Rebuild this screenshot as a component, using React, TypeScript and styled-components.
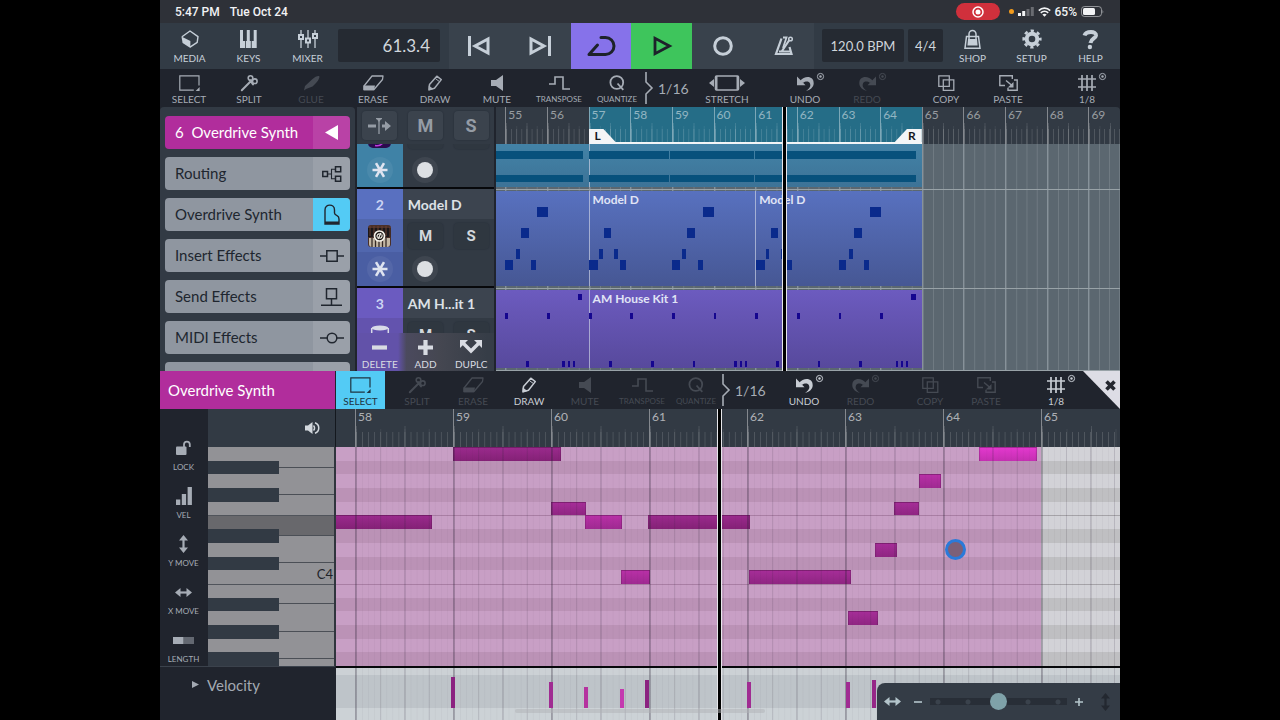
import React from "react";
import styled, { createGlobalStyle, css } from "styled-components";

/* ---------- theme values ---------- */
const c = {
  status: "#2e3138",
  bar: "#323b45",
  transport: "#39424c",
  dark: "#20242d",
  panel: "#323a44",
  raised: "#3b434d",
  lcd: "#252a32",
  icon: "#c6cfd8",
  tool: "#a6acb5",
  dim: "#454a53",
  magenta: "#b12d9c",
  cyan: "#53cbf5",
};

const GlobalStyle = createGlobalStyle`
  * { box-sizing: border-box; }
  body {
    margin: 0;
    background: #000;
    font-family: Lato, "Open Sans", sans-serif;
  }
  button {
    margin: 0;
    padding: 0;
    border: 0;
    background: none;
    color: inherit;
    font: inherit;
    cursor: pointer;
  }
  svg { display: block; overflow: visible; }
`;

const Screen = styled.main`
  position: relative;
  width: 75%;
  height: 100vh;
  min-height: 600px;
  margin: 0 auto;
  display: grid;
  grid-template-columns: minmax(0, 1fr);
  grid-template-rows: auto auto auto minmax(0, 264fr) minmax(0, 349fr);
  overflow: hidden;
  background: ${c.dark};
`;

/* ---------- status bar ---------- */
const StatusBar = styled.header`
  height: 23px;
  display: flex;
  align-items: center;
  gap: 10px;
  padding: 0 16px 0 15px;
  background: ${c.status};
  color: #f2f3f5;
  font: 500 12px/16px Roboto, sans-serif;
`;
const StatusRight = styled.div`
  margin-left: auto;
  display: flex;
  align-items: center;
  gap: 4px;
`;
const RecordPill = styled.button`
  width: 44px;
  height: 17px;
  margin-right: 5px;
  display: grid;
  place-items: center;
  border-radius: 9px;
  background: #d0303c;
  color: #fff;
`;
const OrangeDot = styled.span`
  width: 5px;
  height: 5px;
  border-radius: 50%;
  background: #f29b1d;
`;

/* ---------- main toolbar ---------- */
const MainBar = styled.nav`
  height: 46px;
  display: grid;
  grid-template-columns: 59fr 59fr 59fr 1fr 102fr 9fr 365fr 8fr 82fr 4fr 35fr 59fr 59fr 59fr;
  background: ${c.bar};
`;
const MainButton = styled.button<{ $col: number }>`
  grid-column: ${(p) => p.$col};
  display: flex;
  flex-direction: column;
  align-items: center;
  padding-top: 6px;
  gap: 4px;
  color: ${c.icon};
  font-size: 10px;
  line-height: 10px;
`;
const MainIcon = styled.span`
  height: 20px;
  display: grid;
  place-items: center;
`;
const Lcd = styled.output<{ $col: number; $right?: boolean }>`
  grid-column: ${(p) => p.$col};
  height: 33px;
  margin-top: 6px;
  padding: ${(p) => (p.$right ? "0 10px" : "0")};
  display: flex;
  align-items: center;
  justify-content: ${(p) => (p.$right ? "flex-end" : "center")};
  border-radius: 2px;
  background: ${c.lcd};
  color: #d0d6dc;
  font-size: ${(p) => (p.$right ? 17 : 13)}px;
  white-space: nowrap;
`;
const Transport = styled.div`
  grid-column: 7;
  display: grid;
  grid-template-columns: repeat(6, 1fr);
  background: ${c.transport};
`;
const TransportButton = styled.button<{ $bg?: string }>`
  display: grid;
  place-items: center;
  background: ${(p) => p.$bg ?? "transparent"};
  color: ${(p) => (p.$bg ? "#1d222a" : c.icon)};
`;

/* ---------- tool rows ---------- */
const ToolRow = styled.nav<{ $columns: string }>`
  height: 38px;
  display: grid;
  grid-template-columns: ${(p) => p.$columns};
  grid-template-rows: 38px;
  background: ${c.dark};
`;
const Tool = styled.button<{ $col: number; $active?: boolean; $small?: boolean; $bright?: boolean }>`
  grid-area: 1 / ${(p) => p.$col};
  min-width: 0;
  display: flex;
  flex-direction: column;
  align-items: center;
  padding-top: 5px;
  gap: 2px;
  color: ${c.tool};
  font-size: ${(p) => (p.$small ? 8 : 10)}px;
  line-height: 11px;
  white-space: nowrap;
  &:disabled {
    color: ${c.dim};
    cursor: default;
  }
  ${(p) => p.$bright && css`color: #c8cdd4;`}
  ${(p) => p.$active && css`background: ${c.cyan}; color: #1f3442;`}
`;
const ToolIcon = styled.span`
  position: relative;
  height: 18px;
  display: grid;
  place-items: center;
`;
const Badge = styled.span`
  position: absolute;
  top: -1px;
  left: 100%;
  margin-left: 3px;
`;
const QuantValue = styled.button<{ $col: number }>`
  grid-area: 1 / ${(p) => p.$col};
  display: flex;
  align-items: center;
  gap: 5px;
  padding-left: 1px;
  color: ${c.tool};
  font-size: 14px;
  white-space: nowrap;
`;
const CloseCorner = styled.button<{ $col: number }>`
  grid-area: 1 / ${(p) => p.$col};
  display: flex;
  justify-content: flex-end;
  padding: 9px 4px;
  background: #dddde5;
  color: #24272f;
  clip-path: polygon(0 0, 100% 0, 100% 100%);
`;

/* ---------- arrange area ---------- */
const Arrange = styled.section`
  display: grid;
  grid-template-columns: 195fr 2fr 137fr 2fr 624fr;
  overflow: hidden;
  background: ${c.dark};
`;
const Sidebar = styled.aside`
  grid-column: 1;
  display: flex;
  flex-direction: column;
  gap: 8px;
  padding: 9px 5px 0;
  overflow: hidden;
  border-radius: 4px 4px 0 0;
  background: ${c.panel};
`;
const SideItem = styled.button<{ $tone: "magenta" | "gray" }>`
  flex: none;
  height: 33px;
  display: flex;
  align-items: stretch;
  overflow: hidden;
  border-radius: 4px;
  background: ${(p) => (p.$tone === "magenta" ? c.magenta : "#8f96a0")};
  color: ${(p) => (p.$tone === "magenta" ? "#fff" : "#20262f")};
  font-size: 15px;
  text-align: left;
`;
const SideLabel = styled.span`
  flex: 1;
  min-width: 0;
  padding: 0 10px;
  line-height: 33px;
  white-space: pre;
`;
const SideIcon = styled.span<{ $on?: boolean }>`
  width: 37px;
  display: grid;
  place-items: center;
  background: ${(p) => (p.$on ? c.cyan : "rgba(255, 255, 255, 0.1)")};
`;

const TrackList = styled.div`
  grid-column: 3;
  position: relative;
  display: flex;
  flex-direction: column;
  overflow: hidden;
  background: ${c.panel};
`;
const TrackHead = styled.div`
  flex: none;
  height: 37px;
  display: grid;
  grid-template-columns: repeat(3, 1fr);
  place-items: center;
`;
const PadButton = styled.button<{ $large?: boolean }>`
  width: 35px;
  height: ${(p) => (p.$large ? 29 : 26)}px;
  display: grid;
  place-items: center;
  border-radius: 4px;
  background: ${(p) => (p.$large ? c.raised : "#2f3740")};
  box-shadow: 0 0 1px 1px rgba(20, 24, 30, 0.12);
  color: ${(p) => (p.$large ? "#959ca5" : "#d3d7dd")};
  font: 700 ${(p) => (p.$large ? 18 : 15)}px/20px Roboto, sans-serif;
`;
const Track = styled.article`
  flex: 1;
  min-height: 0;
  display: flex;
  flex-direction: column;
  overflow: hidden;
  border-bottom: 2px solid #07080b;
`;
const ClippedTrack = styled(Track)`
  flex: none;
  height: 45px;
  justify-content: flex-end;
`;
const FullTrack = styled(Track)`
  flex: none;
  height: 99px;
`;
const TrackRow = styled.div<{ $bg: string; $height: number; $title?: boolean }>`
  flex: none;
  height: ${(p) => p.$height}px;
  display: grid;
  grid-template-columns: repeat(3, 1fr);
  place-items: center;
  background: linear-gradient(to right, ${(p) => p.$bg} 33.5%, ${(p) => (p.$title ? "#3c444f" : c.panel)} 33.5%);
  color: #d9dbe8;
`;
const TrackNumber = styled.span`
  color: #ccd4f3;
  font-weight: 700;
  font-size: 14px;
`;
const TrackName = styled.h3`
  grid-column: span 2;
  justify-self: start;
  margin: 0;
  padding-left: 5px;
  color: #dde1e6;
  font-weight: 700;
  font-size: 14px;
  white-space: nowrap;
`;
const Round = styled.button`
  width: 26px;
  height: 26px;
  display: grid;
  place-items: center;
  border-radius: 50%;
  background: rgba(255, 255, 255, 0.06);
  color: #dfe4f0;
`;
const RecDot = styled.span`
  width: 16px;
  height: 16px;
  border-radius: 50%;
  background: #dcdfe3;
`;
const TrackActions = styled.div`
  position: absolute;
  inset: auto 0 0 0;
  height: 38px;
  display: grid;
  grid-template-columns: repeat(3, 1fr);
  background: linear-gradient(to right, #6252a9 30%, #4b4a5e 36%, #454751 60%, #363d47 95%);
`;
const TrackAction = styled.button`
  display: flex;
  flex-direction: column;
  align-items: center;
  padding-top: 4px;
  gap: 2px;
  color: #d8dbe2;
  font-size: 10px;
  line-height: 10px;
`;
const ActionIcon = styled.span`
  height: 20px;
  display: grid;
  place-items: center;
`;

/* ---------- timelines ---------- */
const ARRANGE_COLUMNS = "93fr repeat(14, 416.5fr) 316fr";
const ROLL_COLUMNS = "19fr repeat(7, 98fr) 79fr";
const arrangeX = (bar: number) => `${((9.3 + (bar - 55) * 41.65) / 624) * 100}%`;
const arrangeW = (bars: number) => `${((bars * 41.65) / 624) * 100}%`;
const rollX = (bar: number) => `${((19 + (bar - 58) * 98) / 784) * 100}%`;
const rollW = (bars: number) => `${((bars * 98) / 784) * 100}%`;

const Timeline = styled.div`
  grid-column: 5;
  position: relative;
  display: flex;
  flex-direction: column;
  overflow: hidden;
  border-radius: 0 4px 0 0;
`;
const Ruler = styled.div<{ $height: number }>`
  position: relative;
  flex: none;
  height: ${(p) => p.$height}px;
  display: flex;
  overflow: hidden;
  background: ${c.panel};
`;
const BarRow = styled.div<{ $columns: string }>`
  position: relative;
  flex: 1;
  display: grid;
  grid-template-columns: ${(p) => p.$columns};
  grid-template-rows: 100%;
`;
const tick = (a: number) => `linear-gradient(to right, rgba(255,255,255,${a}) 1px, transparent 1px)`;
const RulerCell = styled.span<{ $fine: string; $first: boolean; $long?: boolean }>`
  min-width: 0;
  padding-left: 2px;
  overflow: hidden;
  border-left: ${(p) => (p.$first ? "0" : "1px solid rgba(255, 255, 255, 0.4)")};
  background-image: ${(p) => (p.$first ? "none" : `${tick(0.12)}, ${tick(0.06)}, ${tick(0.14)}`)};
  background-repeat: repeat-x;
  background-position: left bottom;
  background-size: ${(p) => `50% 21px, 25% 18px, ${p.$fine} 15px`};
  color: rgba(255, 255, 255, ${(p) => (p.$long ? 0.62 : 0.5)});
  font-size: 12px;
  line-height: 16px;
`;
const LastRulerCell = styled(RulerCell)<{ $bar: number }>`
  background-size: ${(p) => `${p.$bar / 2}px 21px, ${p.$bar / 4}px 18px, ${p.$fine} 15px`};
`;
const Loop = styled.div`
  position: absolute;
  top: 0;
  bottom: 0;
  background: #256d87;
`;
const LoopEdge = styled.div`
  position: absolute;
  top: 22px;
  bottom: 0;
  display: flex;
  justify-content: space-between;
  border-bottom: 2px solid #f3f5f7;
`;
const Flag = styled.span<{ $side: "l" | "r" }>`
  width: 27px;
  padding: 0 6px;
  background: #f3f5f7;
  color: #15181d;
  font: 700 12px/14px Lato, sans-serif;
  text-align: ${(p) => (p.$side === "l" ? "left" : "right")};
  clip-path: ${(p) =>
    p.$side === "l" ? "polygon(0 0, 55% 0, 100% 100%, 0 100%)" : "polygon(45% 0, 100% 0, 100% 100%, 0 100%)"};
`;
const Lanes = styled.div`
  position: relative;
  flex: 1;
  min-height: 0;
  display: flex;
  flex-direction: column;
  background: #5b6770;
`;
const Layer = styled.div`
  position: absolute;
  inset: 0;
  display: flex;
`;
const LaneCell = styled.span<{ $first: boolean; $last?: boolean }>`
  border-left: ${(p) => (p.$first ? "0" : "1px solid #87929a")};
  background-image: ${(p) => (p.$first ? "none" : "linear-gradient(to right, #6f7a82 1px, transparent 1px)")};
  background-size: ${(p) => (p.$last ? "10px 100%" : "25% 100%")};
`;
const Lane = styled.div<{ $size: string }>`
  position: relative;
  flex: ${(p) => p.$size};
  overflow: hidden;
  border-bottom: 1px solid #98a2a7;
`;
const Clip = styled.div<{ $from: string; $to: string; $top: number }>`
  position: absolute;
  top: ${(p) => p.$top}px;
  bottom: 2px;
  padding: 1px 3px;
  border-left: 1px solid rgba(200, 205, 225, 0.7);
  background: linear-gradient(${(p) => p.$from}, ${(p) => p.$to});
  color: #e0e4f5;
  font-weight: 700;
  font-size: 12px;
  line-height: 16px;
  white-space: nowrap;
`;
const ClipNote = styled.i<{ $top: number; $height: number; $fill: string }>`
  position: absolute;
  top: ${(p) => p.$top}px;
  height: ${(p) => p.$height}px;
  min-width: 2px;
  background: ${(p) => p.$fill};
`;
const Playhead = styled.div`
  position: absolute;
  top: 0;
  bottom: 0;
  width: 5px;
  margin-left: -3px;
  border: solid #e6e6ea;
  border-width: 0 1px;
  background: #000;
`;

/* ---------- key editor ---------- */
const Editor = styled.section`
  position: relative;
  display: flex;
  flex-direction: column;
  min-height: 0;
  background: ${c.dark};
`;
const EditorTitle = styled.h2`
  grid-area: 1 / 1;
  margin: 0 1px 0 0;
  padding-left: 8px;
  background: ${c.magenta};
  color: #fff;
  font-weight: 400;
  font-size: 15px;
  line-height: 38px;
`;
const EditorBody = styled.div`
  flex: 1;
  min-height: 0;
  display: grid;
  grid-template-columns: 48fr 128fr 784fr;
  grid-template-rows: 38px minmax(0, 1fr) 54px;
`;
const EditTools = styled.div`
  grid-area: 1 / 1 / 3 / 2;
  display: flex;
  flex-direction: column;
  gap: 12px;
  padding: 28px 1px 0 0;
`;
const EditTool = styled.button`
  height: 36px;
  display: flex;
  flex-direction: column;
  align-items: center;
  gap: 3px;
  color: ${c.tool};
  font-size: 8px;
  line-height: 10px;
`;
const EditIcon = styled.span`
  height: 22px;
  display: grid;
  place-items: center;
`;
const KeysHead = styled.div`
  grid-area: 1 / 2;
  display: flex;
  align-items: center;
  justify-content: flex-end;
  padding-right: 15px;
  border-right: 1px solid #14181e;
  background: ${c.panel};
  color: #d3d8de;
`;
const Keys = styled.div`
  grid-area: 2 / 2;
  display: grid;
  grid-template-rows: repeat(16, minmax(0, 1fr));
  border-right: 2px solid #30353d;
  background: #929296;
`;
const KeyRow = styled.div<{ $held?: boolean; $line?: boolean }>`
  display: flex;
  justify-content: flex-end;
  align-items: flex-start;
  padding-right: 1px;
  border-top: ${(p) => (p.$line ? "1px solid #50545b" : "0")};
  background: ${(p) => (p.$held ? "#68686c" : "transparent")};
  color: #1f232a;
  font-size: 13px;
  line-height: 8px;
`;
const BlackKeyRow = styled.div<{ $held?: boolean }>`
  display: flex;
  background: linear-gradient(
    ${(p) => (p.$held ? "#68686c" : "#929296")} calc(50% - 1px),
    #4b4f56 calc(50% - 1px),
    #4b4f56 50%,
    #929296 50%
  );
  &::before {
    content: "";
    width: 56%;
    background: ${c.panel};
  }
`;
const Roll = styled.div`
  grid-area: 1 / 3 / 4 / 4;
  position: relative;
  min-height: 0;
  display: grid;
  grid-template-rows: 38px minmax(0, 1fr) 54px;
`;
const Notes = styled.div`
  position: relative;
  display: grid;
  grid-template-rows: repeat(16, minmax(0, 1fr));
  overflow: hidden;
`;
const PitchRow = styled.div<{ $black: boolean; $line: boolean }>`
  background: ${(p) => (p.$black ? "#bfbfc2" : "#d2d2d7")};
  border-top: ${(p) => (p.$line ? "1px solid #a5a3a8" : "0")};
`;
const PartTint = styled.div`
  position: absolute;
  top: 0;
  bottom: 0;
  left: 0;
  background: rgba(178, 44, 156, 0.3);
`;
const ink = (a: number) => `linear-gradient(to right, rgba(40,30,50,${a}) 1px, transparent 1px)`;
const RollCell = styled.span<{ $first: boolean; $last: boolean }>`
  border-left: ${(p) => (p.$first ? "0" : "1px solid rgba(40, 30, 50, 0.3)")};
  background-image: ${(p) => (p.$first ? "none" : `${ink(0.13)}, ${ink(0.12)}, ${ink(0.04)}`)};
  background-size: ${(p) => (p.$last ? "49px 100%, 24px 100%, 6px 100%" : "50% 100%, 25% 100%, 6.25% 100%")};
`;
const noteTones = {
  dark: "linear-gradient(#9a2a8c, #842176)",
  mid: "linear-gradient(#a52d97, #8f2582)",
  warm: "linear-gradient(#b830a6, #9f2991)",
  hot: "linear-gradient(#e238cd, #c42fb1)",
};
const Note = styled.i<{ $tone: keyof typeof noteTones }>`
  position: absolute;
  height: 6.25%;
  border: solid rgba(70, 15, 65, 0.25);
  border-width: 1px 1px 0;
  background: ${(p) => noteTones[p.$tone]};
`;
const Velocity = styled.div`
  position: relative;
  overflow: hidden;
  border-top: 2px solid #07080b;
  background: linear-gradient(#ccd1d5 7px, #bec4c9 7px, #bec4c9 40px, #ccd2d6 40px);
`;
const VelocityBar = styled.i<{ $tone: string }>`
  position: absolute;
  bottom: 12px;
  width: 4px;
  margin-left: -2px;
  background: ${(p) => p.$tone};
`;
const VelocityHead = styled.button`
  grid-area: 3 / 1 / 4 / 3;
  display: flex;
  align-items: flex-start;
  gap: 8px;
  margin: 0 1px 0 0;
  padding: 8px 0 0 32px;
  border-top: 1px solid #3b424c;
  color: #a3a9b2;
  font-size: 15px;
  line-height: 20px;
`;
const Marker = styled.span`
  display: grid;
  place-items: center;
  height: 18px;
`;
const Touch = styled.span`
  position: absolute;
  width: 21px;
  height: 21px;
  margin: -10px 0 0 -10px;
  border: 3px solid #2a7ad9;
  border-radius: 50%;
  background: #7c6078;
`;
const ZoomPanel = styled.div`
  position: absolute;
  right: 0;
  bottom: 0;
  width: 31%;
  height: 37px;
  display: flex;
  align-items: center;
  padding: 0 5px 0 7px;
  border-radius: 8px 0 0 0;
  background: #343c46;
  color: #b4c5cb;
`;
const ZoomButton = styled.button`
  flex: none;
  width: 20px;
  height: 24px;
  display: grid;
  place-items: center;
`;
const ZoomOut = styled(ZoomButton)`
  margin-left: 7px;
`;
const VerticalZoom = styled(ZoomButton)`
  margin-left: 6px;
  color: #232830;
`;
const ZoomSlider = styled.input`
  flex: 1;
  min-width: 0;
  height: 20px;
  margin: 0 2px;
  appearance: none;
  background:
    radial-gradient(circle, #3a424c 2px, transparent 3px) -7px center / 30px 8px repeat-x,
    linear-gradient(#282e37, #282e37) center / 100% 7px no-repeat;
  border-radius: 4px;
  &::-webkit-slider-thumb {
    appearance: none;
    width: 17px;
    height: 17px;
    border-radius: 50%;
    background: #7fa2a9;
  }
`;
const HomeIndicator = styled.div`
  position: absolute;
  left: 37%;
  right: 37%;
  bottom: 7px;
  height: 4px;
  border-radius: 2px;
  background: rgba(175, 178, 182, 0.5);
`;

/* ---------- icons ---------- */
type IconProps = { w: number; h: number; sw?: number; children: React.ReactNode };
const Ico = ({ w, h, sw = 1.5, children }: IconProps) => (
  <svg width={w} height={h} viewBox={`0 0 ${w} ${h}`} fill="none" stroke="currentColor" strokeWidth={sw} aria-hidden="true">
    {children}
  </svg>
);
const solid = { fill: "currentColor", stroke: "none" } as const;

const icons = {
  media: (
    <Ico w={18} h={18} sw={1.4}>
      <path d="M1 6.8 9 1l8 5.6-.8 5.8L9 17.2" strokeLinejoin="round" />
      <path {...solid} d="M.4 6.4 9.4 11v7L1.6 13z" />
    </Ico>
  ),
  keys: (
    <Ico w={17} h={18}>
      <path {...solid} d="M0 0h3v11h2v7H0zM5.800 11h1V0h3v11h1v7h-5zM11.700 11h2V0h3v18h-5z" />
    </Ico>
  ),
  mixer: (
    <Ico w={20} h={19} sw={1.3}>
      <path d="M3 0v18M10 0v18M17 0v18" />
      <path d="M1 5h4v4H1zM8 8.500h4v4H8zM15 4h4v4h-4z" fill="#323b45" strokeWidth="2" />
    </Ico>
  ),
  back: (
    <Ico w={22} h={20} sw={3}>
      <path d="M1.500 0v20M20 3v14L7 10z" />
    </Ico>
  ),
  next: (
    <Ico w={22} h={20} sw={3}>
      <path d="M20.500 0v20M2 3v14l13-7z" />
    </Ico>
  ),
  cycle: (
    <Ico w={28} h={20} sw={3}>
      <path d="M14 1.500h4.500a8.500 8.500 0 0 1 0 17H2L10.500 9" strokeLinejoin="round" strokeLinecap="round" />
    </Ico>
  ),
  play: (
    <Ico w={20} h={20} sw={2.8}>
      <path d="M3 2.300v15.400L17.500 10z" />
    </Ico>
  ),
  record: (
    <Ico w={20} h={20} sw={3}>
      <circle cx="10" cy="10" r="8.300" />
    </Ico>
  ),
  metronome: (
    <Ico w={20} h={20} sw={2}>
      <path d="M5 15.500h12M7.500 2.500 2 18h15.500l-2-7M8 15 16 3" strokeWidth="2.200" />
      <path d="M9 1.500h3.500L9 12" strokeWidth="1.800" />
      <circle cx="16.500" cy="3" r="1.800" fill="#39424c" strokeWidth="1.500" />
    </Ico>
  ),
  shop: (
    <Ico w={17} h={19} sw={1.5}>
      <path d="M2.500 6.500h12l1.500 11.700H1z" />
      <path d="M5 9V4a3.500 3.500 0 0 1 7 0v5" />
      <path {...solid} d="M4 9h9l.6 6.500H3.400z" />
    </Ico>
  ),
  setup: (
    <Ico w={20} h={20}>
      <circle cx="10" cy="10" r="5.300" strokeWidth="4" />
      <circle cx="10" cy="10" r="8.300" strokeWidth="2.600" strokeDasharray="3.260 3.260" strokeDashoffset="1.630" />
    </Ico>
  ),
  help: (
    <Ico w={16} h={19} sw={4}>
      <path d="M1.500 5.500C3 .8 13.500.8 13 5.500 12.600 8.600 8.200 8.300 7.500 13" />
      <circle {...solid} cx="6.900" cy="17" r="2.200" />
    </Ico>
  ),
  select: (
    <Ico w={21} h={16} sw={1.2}>
      <path d="M20 10.500V.8H.8v14.400h14" />
      <path {...solid} d="M20.600 12v4h-4z" />
    </Ico>
  ),
  split: (
    <Ico w={17} h={16} sw={1.6}>
      <path d="M.8 15.200 10 6M4 12l3.500-3.500M10 6.500l2 3" strokeLinecap="round" strokeWidth="2" />
      <circle cx="9.500" cy="3" r="2.300" />
      <circle cx="13.800" cy="6.200" r="2.300" />
      <path d="M8.500 4.500 11 7" />
    </Ico>
  ),
  glue: (
    <Ico w={17} h={16}>
      <path {...solid} d="M1 15.500 2 11 9 4.500C12 1.500 15 .5 16 1s0 4-3 7l-3.500 3.500L3 14z" />
    </Ico>
  ),
  erase: (
    <Ico w={21} h={16} sw={1.3}>
      <path d="M9 1h11l-.5 3.500L11 14.500H1V11z" strokeLinejoin="round" />
      <path {...solid} d="M.5 10.500H12l-1 4.700H.5z" />
    </Ico>
  ),
  draw: (
    <Ico w={16} h={16} sw={1.500}>
      <path d="M2.500 9.500 9.800 1.200l4.500 3.400-6.800 8.600-5.400 1.500z" strokeLinejoin="round" />
      <path {...solid} d="m1.600 10.500 5 3.500-5.200 1.500z" />
      <path d="m8.300 3.500 4.300 3.200" strokeWidth="1" />
    </Ico>
  ),
  mute: (
    <Ico w={13} h={16}>
      <path {...solid} d="M0 5h5l7-5v16l-7-5H0z" />
    </Ico>
  ),
  transpose: (
    <Ico w={21} h={14} sw={1.6}>
      <path d="M0 8h6V1h8v12h7" />
    </Ico>
  ),
  quantize: (
    <Ico w={16} h={16} sw={1.8}>
      <circle cx="7.800" cy="7.500" r="6.400" />
      <path d="m8.500 8.500 5.800 6.300" />
    </Ico>
  ),
  bracket: (
    <Ico w={8} h={32} sw={1.6}>
      <path d="M1 0v10l6 6-6 6v10" />
    </Ico>
  ),
  stretch: (
    <Ico w={36} h={16} sw={1.5}>
      <rect x="6.500" y="1" width="23" height="14" rx="1" />
      <path {...solid} d="M5 4v8L0 8zM31 4v8l5-4zM6 1h2.500v14H6zM27.500 1H30v14h-2.500z" />
    </Ico>
  ),
  undo: (
    <Ico w={17} h={15} sw={3}>
      <path {...solid} d="M0 .5v8.800h8.500z" />
      <path {...solid} d="M3 5C8-1 17 0 16.700 7.500 16.500 11.500 13 14 9 15c4-3 5-5 4-7.500C12 5 8.500 5 6 7z" />
    </Ico>
  ),
  redo: (
    <Ico w={17} h={15} sw={3}>
      <path {...solid} d="M17 .5v8.800H8.500z" />
      <path {...solid} d="M14 5C9-1 0 0 .3 7.500.5 11.500 4 14 8 15c-4-3-5-5-4-7.500C5 5 8.500 5 11 7z" />
    </Ico>
  ),
  badge: (
    <Ico w={7} h={7} sw={1}>
      <circle cx="3.500" cy="3.500" r="3.100" />
      <circle {...solid} cx="3.500" cy="3.500" r="1.200" />
    </Ico>
  ),
  copy: (
    <Ico w={17} h={16} sw={1.3}>
      <path d="M.8.8h10.500v10.500H.8zM5.300 4.800h10.500v10.500H5.300z" />
    </Ico>
  ),
  paste: (
    <Ico w={19} h={16} sw={1.4}>
      <path d="M6 10.500H.8V.8h12.500V4M15 5h3.200v10.300H9v-2.500" />
      <path d="M7 5.500l6 5" />
      <path {...solid} d="M14.500 7v5.500H8.800z" />
    </Ico>
  ),
  grid: (
    <Ico w={18} h={16} sw={1.7}>
      <path d="M4 0v16M9 0v16M14 0v16M0 4h18M0 12h18" />
    </Ico>
  ),
  close: (
    <Ico w={11} h={11} sw={3.6}>
      <path d="m1.500 1.500 8 8M9.500 1.500l-8 8" />
    </Ico>
  ),
  triLeft: (
    <Ico w={13} h={15}>
      <path {...solid} d="M13 0v15L0 7.500z" />
    </Ico>
  ),
  routing: (
    <Ico w={20} h={16} sw={1.5}>
      <path d="M.8 5.500h4.700v5H.8zM13.500.8h5.200v5h-5.200zM13.500 10.300h5.200v5h-5.200z" />
      <path d="M5.500 8h4M13 3.200H9.500v9.600H13" strokeWidth="1.100" />
    </Ico>
  ),
  piano: (
    <Ico w={16} h={21} sw={1.4}>
      <path d="M1 20V6c0-6.500 9.500-6.500 9.500 0v3c0 1.500 1 2 2.500 2.600 1.800.7 2 1.600 2 3.400v5z" />
      <path d="M1 18.700h14" strokeWidth="2.500" />
    </Ico>
  ),
  insert: (
    <Ico w={24} h={12} sw={1.5}>
      <path d="M6.800.8h10.400v10.400H6.800zM0 6h6.800M17.200 6H24" />
    </Ico>
  ),
  send: (
    <Ico w={21} h={18} sw={1.5}>
      <path d="M5.500.8h10v10h-10zM10.500 11v6M0 17.200h21" />
    </Ico>
  ),
  midi: (
    <Ico w={24} h={12} sw={1.5}>
      <circle cx="12" cy="6" r="4.800" />
      <path d="M0 6h7.200M16.800 6H24" />
    </Ico>
  ),
  follow: (
    <Ico w={23} h={16} sw={3}>
      <path d="M0 8h8M14 8h5" />
      <path d="M8 .7h6M11 0v16" strokeWidth="1.300" />
      <path {...solid} d="M17 3l6 5-6 5zM8 0h6l-3 4z" />
    </Ico>
  ),
  star: (
    <Ico w={16} h={16} sw={2.6}>
      <path d="M.5 8h15M4 1.200l8 13.600M12 1.200 4 14.800" />
    </Ico>
  ),
  synth: (
    <svg width="23" height="22" viewBox="0 0 23 22" aria-hidden="true">
      <rect width="23" height="22" rx="3" fill="#4b3028" />
      <path d="M0 3h23v9H0z" fill="#1b1718" />
      <path d="M2 1v10M6 1v10M10 1v10M14 1v10M18 1v10M22 2v10" stroke="#6b4030" />
      <path d="M1 13h21v6q0 3-3 3H4q-3 0-3-3z" fill="#c3b7a4" />
      <path d="M4 13v9M7.500 13v9M11 13v9M14.500 13v9M18 13v9" stroke="#352a27" strokeWidth="1.300" />
      <circle cx="11.500" cy="11" r="5" fill="#171310" stroke="#f6f2ea" strokeWidth="1.700" />
      <path d="M9.500 12.700c-1.500-2.500.8-4.700 3-3.500M13.700 9.300c1.500 2.500-.8 4.700-3 3.500M13 8l-3 6" stroke="#f6f2ea" fill="none" strokeWidth="1.200" />
    </svg>
  ),
  purpleApp: (
    <svg width="23" height="24" viewBox="0 0 23 24" aria-hidden="true">
      <rect width="23" height="24" rx="5" fill="#2a0b4d" />
      <path d="M7 21.500c4 1 7-1 9-4" stroke="#c03be0" strokeWidth="1.500" fill="none" />
    </svg>
  ),
  drum: (
    <Ico w={18} h={20} sw={1.5}>
      <ellipse cx="9" cy="3" rx="8.300" ry="2.500" {...solid} />
      <path d="M.7 3v12c0 3 16.600 3 16.600 0V3" />
    </Ico>
  ),
  minus: (
    <Ico w={15} h={15} sw={4.2}>
      <path d="M0 7.500h15" />
    </Ico>
  ),
  plus: (
    <Ico w={15} h={15} sw={4.2}>
      <path d="M0 7.500h15M7.500 0v15" />
    </Ico>
  ),
  duplicate: (
    <Ico w={22} h={14} sw={3.4}>
      <path d="M3.500 3.500 11 11l7.500-7.500" />
      <path {...solid} d="M0 0h8L0 8zM22 0h-8l8 8z" />
    </Ico>
  ),
  lock: (
    <Ico w={15} h={14} sw={1.800}>
      <rect {...solid} x="0" y="5.500" width="10.500" height="8.500" rx="1" />
      <path d="M8 6V3.500a2.900 2.900 0 0 1 5.800 0V6" />
    </Ico>
  ),
  vel: (
    <Ico w={16} h={18}>
      <path {...solid} d="M0 12.500h4.300V18H0zM5.800 7h4.300v11H5.800zM11.600 0h4.300v18h-4.300z" />
    </Ico>
  ),
  yMove: (
    <Ico w={9} h={18} sw={2.2}>
      <path d="M4.500 3v12" />
      <path {...solid} d="M4.500 0 9 5.500H0zM4.500 18 9 12.500H0z" />
    </Ico>
  ),
  xMove: (
    <Ico w={17} h={9} sw={2.2}>
      <path d="M3 4.500h11" />
      <path {...solid} d="M0 4.500 5.500 0v9zM17 4.500 11.500 0v9z" />
    </Ico>
  ),
  length: (
    <Ico w={21} h={7}>
      <path {...solid} d="M0 0h10.500v7H0z" />
      <path {...solid} opacity=".5" d="M10.500 0H21v7H10.500z" />
    </Ico>
  ),
  speaker: (
    <Ico w={15} h={12} sw={1.5}>
      <path {...solid} d="M0 3.500h3L7.500 0v12L3 8.500H0z" />
      <path d="M8.500 3.500a3.500 3.500 0 0 1 0 5M10 .8c5 1.700 5 8.700 0 10.400" />
    </Ico>
  ),
  triRight: (
    <Ico w={7} h={7}>
      <path {...solid} d="M0 0v7l7-3.500z" />
    </Ico>
  ),
  thinMinus: (
    <Ico w={8} h={8} sw={1.6}>
      <path d="M0 4h8" />
    </Ico>
  ),
  thinPlus: (
    <Ico w={8} h={8} sw={1.6}>
      <path d="M0 4h8M4 0v8" />
    </Ico>
  ),
  pill: (
    <Ico w={12} h={12} sw={1.5}>
      <circle cx="6" cy="6" r="5" />
      <circle {...solid} cx="6" cy="6" r="2.500" />
    </Ico>
  ),
  signal: (
    <Ico w={16} h={9}>
      <path {...solid} d="M0 6h3v3H0zM4.200 4h3v5h-3z" />
      <path {...solid} opacity=".3" d="M8.500 2h3v7h-3zM12.800 0h3v9h-3z" />
    </Ico>
  ),
  wifi: (
    <Ico w={13} h={10} sw={1.7}>
      <path d="M.8 3.600c3.200-3.200 8.200-3.200 11.400 0M2.800 5.800c2.100-2 5.300-2 7.400 0" />
      <path {...solid} d="M4.300 7.500c1.300-1.100 3.100-1.100 4.400 0L6.500 9.800z" />
    </Ico>
  ),
  battery: (
    <Ico w={23} h={11} sw={1}>
      <rect x=".5" y=".5" width="20" height="10" rx="3" opacity=".5" />
      <rect {...solid} x="2" y="2" width="12" height="7" rx="1.500" />
      <path {...solid} opacity=".5" d="M21.500 3.500q1.500 2 0 4z" />
    </Ico>
  ),
};
type IconName = keyof typeof icons;

/* ---------- data ---------- */
type ToolDef = { col: number; label: string; icon: IconName; off?: boolean; small?: boolean; badge?: boolean; on?: boolean; bright?: boolean };

const projectTools: ToolDef[] = [
  { col: 1, label: "SELECT", icon: "select" },
  { col: 2, label: "SPLIT", icon: "split" },
  { col: 3, label: "GLUE", icon: "glue", off: true },
  { col: 4, label: "ERASE", icon: "erase" },
  { col: 5, label: "DRAW", icon: "draw" },
  { col: 6, label: "MUTE", icon: "mute" },
  { col: 7, label: "TRANSPOSE", icon: "transpose", small: true },
  { col: 8, label: "QUANTIZE", icon: "quantize", small: true },
  { col: 10, label: "STRETCH", icon: "stretch" },
  { col: 12, label: "UNDO", icon: "undo", badge: true },
  { col: 13, label: "REDO", icon: "redo", off: true, badge: true },
  { col: 15, label: "COPY", icon: "copy" },
  { col: 16, label: "PASTE", icon: "paste" },
  { col: 18, label: "1/8", icon: "grid", badge: true },
];
const editorTools: ToolDef[] = [
  { col: 2, label: "SELECT", icon: "select", on: true },
  { col: 4, label: "SPLIT", icon: "split", off: true },
  { col: 5, label: "ERASE", icon: "erase", off: true },
  { col: 6, label: "DRAW", icon: "draw", bright: true },
  { col: 7, label: "MUTE", icon: "mute", off: true },
  { col: 8, label: "TRANSPOSE", icon: "transpose", off: true, small: true },
  { col: 9, label: "QUANTIZE", icon: "quantize", off: true, small: true },
  { col: 11, label: "UNDO", icon: "undo", badge: true, bright: true },
  { col: 12, label: "REDO", icon: "redo", off: true, badge: true },
  { col: 14, label: "COPY", icon: "copy", off: true },
  { col: 15, label: "PASTE", icon: "paste", off: true },
  { col: 17, label: "1/8", icon: "grid", badge: true, bright: true },
];
const sideItems: { label: string; icon: IconName; on?: boolean; magenta?: boolean }[] = [
  { label: "6  Overdrive Synth", icon: "triLeft", magenta: true },
  { label: "Routing", icon: "routing" },
  { label: "Overdrive Synth", icon: "piano", on: true },
  { label: "Insert Effects", icon: "insert" },
  { label: "Send Effects", icon: "send" },
  { label: "MIDI Effects", icon: "midi" },
];

/* Model D riff: [start in bars, length in bars, top in px] */
const riffA = [[0.01, 0.22, 69], [0.26, 0.08, 58], [0.37, 0.18, 37], [0.62, 0.08, 58], [0.75, 0.14, 69]];
const riffB = [[0, 0.19, 69], [0.25, 0.1, 58], [0.37, 0.19, 37], [0.62, 0.12, 69], [0.75, 0.27, 16]];
const modelNotes = [
  ...[57, 61].flatMap((bar) => riffA.map(([s, l, t]) => [bar + s, l, t])),
  ...[55, 59, 63].flatMap((bar) => riffB.map(([s, l, t]) => [bar + s, l, t])),
];
const kitHits = [
  ...[56.75, 64.75].map((b) => [b, 0.1, 5]),
  ...[55, 56, 57, 58, 59, 60, 61, 62, 63, 64].map((b) => [b, 0.07, 24]),
  ...[55.5, 56.37, 56.5, 56.62, 57.5, 58.5, 59.5, 60.5, 60.63, 60.75, 61.5, 62.5, 63.5, 64.37, 64.5, 64.62].map((b) => [b, 0.06, 72]),
];
const audioParts = [[54, 2.87], [57, 1.92], [58.95, 2.01], [61, 3.87]];

/* Key editor: [start bar, end bar, pitch row, tone] */
const rollNotes: [number, number, number, keyof typeof noteTones][] = [
  [59, 60.1, 0, "dark"],
  [60, 60.36, 4, "mid"],
  [57.8, 58.79, 5, "dark"],
  [60.35, 60.72, 5, "warm"],
  [60.99, 62.03, 5, "dark"],
  [60.71, 61.01, 9, "warm"],
  [62.02, 63.06, 9, "mid"],
  [63.03, 63.34, 12, "mid"],
  [63.31, 63.53, 7, "mid"],
  [63.5, 63.75, 4, "mid"],
  [63.75, 63.98, 2, "warm"],
  [64.37, 64.96, 0, "hot"],
];
const velocities: [number, number, string][] = [
  [59, 31, "#8b2280"],
  [60, 26, "#a02c92"],
  [60.36, 21, "#b5329f"],
  [60.72, 19, "#c43aaf"],
  [60.98, 28, "#8b2280"],
  [62.02, 26, "#a02c92"],
  [63.03, 26, "#a02c92"],
  [63.3, 28, "#962787"],
];
const blackRows = [1, 3, 6, 8, 11, 13, 15];
const PLAYHEAD_BAR = 61.72;

const range = (from: number, to: number) => Array.from({ length: to - from + 1 }, (_, i) => from + i);

/* ---------- components ---------- */
const ToolButton = ({ t }: { t: ToolDef }) => (
  <Tool $col={t.col} $active={t.on} $small={t.small} $bright={t.bright} disabled={t.off} type="button">
    <ToolIcon>
      {icons[t.icon]}
      {t.badge && <Badge>{icons.badge}</Badge>}
    </ToolIcon>
    {t.label}
  </Tool>
);

const Main = ({ col, label, icon }: { col: number; label: string; icon: IconName }) => (
  <MainButton $col={col} type="button">
    <MainIcon>{icons[icon]}</MainIcon>
    {label}
  </MainButton>
);

const TrackControls = ({ bg, app, height = 34 }: { bg: string; app: IconName; height?: number }) => (
  <TrackRow $bg={bg} $height={height}>
    {icons[app]}
    <PadButton type="button" aria-label="Mute track">M</PadButton>
    <PadButton type="button" aria-label="Solo track">S</PadButton>
  </TrackRow>
);

const RecordRow = ({ bg }: { bg: string }) => (
  <TrackRow $bg={bg} $height={34}>
    <Round type="button" aria-label="Freeze">{icons.star}</Round>
    <Round type="button" aria-label="Arm recording"><RecDot /></Round>
  </TrackRow>
);

export default function App() {
  return (
    <>
      <GlobalStyle />
      <Screen>
        <StatusBar>
          <span>5:47 PM</span>
          <span>Tue Oct 24</span>
          <StatusRight>
            <RecordPill type="button" aria-label="Stop recording">{icons.pill}</RecordPill>
            <OrangeDot />
            {icons.signal}
            {icons.wifi}
            <span>65%</span>
            {icons.battery}
          </StatusRight>
        </StatusBar>

        <MainBar>
          <Main col={1} label="MEDIA" icon="media" />
          <Main col={2} label="KEYS" icon="keys" />
          <Main col={3} label="MIXER" icon="mixer" />
          <Lcd $col={5} $right>61.3.4</Lcd>
          <Transport>
            <TransportButton type="button" aria-label="Previous">{icons.back}</TransportButton>
            <TransportButton type="button" aria-label="Next">{icons.next}</TransportButton>
            <TransportButton type="button" aria-label="Cycle" $bg="#8672ea">{icons.cycle}</TransportButton>
            <TransportButton type="button" aria-label="Play" $bg="#3ec55c">{icons.play}</TransportButton>
            <TransportButton type="button" aria-label="Record">{icons.record}</TransportButton>
            <TransportButton type="button" aria-label="Metronome">{icons.metronome}</TransportButton>
          </Transport>
          <Lcd $col={9}>120.0 BPM</Lcd>
          <Lcd $col={11}>4/4</Lcd>
          <Main col={12} label="SHOP" icon="shop" />
          <Main col={13} label="SETUP" icon="setup" />
          <Main col={14} label="HELP" icon="help" />
        </MainBar>

        <ToolRow $columns="58fr repeat(6, 62fr) 54fr 52fr 62fr 16fr 62fr 62fr 17fr 62fr 62fr 17fr 62fr 2fr">
          {projectTools.map((t) => <ToolButton key={t.label} t={t} />)}
          <QuantValue $col={9} type="button">{icons.bracket}1/16</QuantValue>
        </ToolRow>

        <Arrange>
          <Sidebar>
            {sideItems.map((s) => (
              <SideItem key={s.label} $tone={s.magenta ? "magenta" : "gray"} type="button">
                <SideLabel>{s.label}</SideLabel>
                <SideIcon $on={s.on}>{icons[s.icon]}</SideIcon>
              </SideItem>
            ))}
            <SideItem $tone="gray" type="button" aria-label="More">
              <SideLabel />
              <SideIcon />
            </SideItem>
          </Sidebar>

          <TrackList>
            <TrackHead>
              <PadButton $large type="button" aria-label="Follow playhead">{icons.follow}</PadButton>
              <PadButton $large type="button" aria-label="Mute all">M</PadButton>
              <PadButton $large type="button" aria-label="Solo all">S</PadButton>
            </TrackHead>
            <ClippedTrack>
              <TrackRow $bg="#3f82a6" $height={34}>
                {icons.purpleApp}
                <PadButton type="button" aria-label="Mute track" />
                <PadButton type="button" aria-label="Solo track" />
              </TrackRow>
              <RecordRow bg="#3f82a6" />
            </ClippedTrack>
            <FullTrack>
              <TrackRow $bg="#5970c0" $height={30} $title>
                <TrackNumber>2</TrackNumber>
                <TrackName>Model D</TrackName>
              </TrackRow>
              <TrackControls bg="#5167ae" app="synth" height={33} />
              <RecordRow bg="#4a5ea3" />
            </FullTrack>
            <Track>
              <TrackRow $bg="#6b5bc0" $height={30} $title>
                <TrackNumber>3</TrackNumber>
                <TrackName>AM H...it 1</TrackName>
              </TrackRow>
              <TrackControls bg="#6353ae" app="drum" />
              <RecordRow bg="#5a4ca0" />
            </Track>
            <TrackActions>
              <TrackAction type="button"><ActionIcon>{icons.minus}</ActionIcon>DELETE</TrackAction>
              <TrackAction type="button"><ActionIcon>{icons.plus}</ActionIcon>ADD</TrackAction>
              <TrackAction type="button"><ActionIcon>{icons.duplicate}</ActionIcon>DUPLC</TrackAction>
            </TrackActions>
          </TrackList>

          <Timeline>
            <Ruler $height={37}>
              <Loop style={{ left: arrangeX(57), width: arrangeW(8) }} />
              <BarRow $columns={ARRANGE_COLUMNS}>
                <RulerCell $fine="12.5%" $first />
                {range(55, 68).map((b) => <RulerCell key={b} $fine="12.5%" $first={false}>{b}</RulerCell>)}
                <LastRulerCell $fine="5px" $first={false} $bar={42}>69</LastRulerCell>
              </BarRow>
              <LoopEdge style={{ left: arrangeX(57), width: arrangeW(8) }}>
                <Flag $side="l">L</Flag>
                <Flag $side="r">R</Flag>
              </LoopEdge>
            </Ruler>
            <Lanes>
              <Layer>
                <BarRow $columns={ARRANGE_COLUMNS}>
                  {range(54, 69).map((b) => <LaneCell key={b} $first={b === 54} $last={b === 69} />)}
                </BarRow>
              </Layer>
              <Lane $size="0 0 46px">
                {[[53, 4], [57, 8]].map(([s, l]) => (
                  <Clip key={s} $from="#4383a7" $to="#3d7397" $top={0} style={{ left: arrangeX(s), width: arrangeW(l) }} />
                ))}
                {audioParts.map(([s, l]) => (
                  <React.Fragment key={s}>
                    <ClipNote $top={7} $height={8} $fill="#07517c" style={{ left: arrangeX(s), width: arrangeW(l) }} />
                    <ClipNote $top={31} $height={7} $fill="#07517c" style={{ left: arrangeX(s), width: arrangeW(l) }} />
                  </React.Fragment>
                ))}
              </Lane>
              <Lane $size="0 0 99px">
                {[53, 57, 61].map((s) => (
                  <Clip key={s} $from="#5871bf" $to="#465794" $top={1} style={{ left: arrangeX(s), width: arrangeW(4) }}>
                    {s > 53 && "Model D"}
                  </Clip>
                ))}
                {modelNotes.map(([s, l, t]) => (
                  <ClipNote key={s} $top={t + 1} $height={10} $fill="#0a2a8c" style={{ left: arrangeX(s), width: arrangeW(l) }} />
                ))}
              </Lane>
              <Lane $size="1">
                {[[53, 4], [57, 8]].map(([s, l]) => (
                  <Clip key={s} $from="#6c5bbf" $to="#57499c" $top={1} style={{ left: arrangeX(s), width: arrangeW(l) }}>
                    {s > 53 && "AM House Kit 1"}
                  </Clip>
                ))}
                {kitHits.map(([s, l, t]) => (
                  <ClipNote key={s} $top={t} $height={6} $fill="#15068f" style={{ left: arrangeX(s), width: arrangeW(l) }} />
                ))}
              </Lane>
            </Lanes>
            <Playhead style={{ left: arrangeX(PLAYHEAD_BAR) }} />
          </Timeline>
        </Arrange>

        <Editor>
          <ToolRow $columns="176fr 49fr 4fr 56fr 56fr 56fr 56fr 58fr 50fr 55fr 56fr 57fr 13fr 56fr 56fr 15fr 54fr 37fr">
            <EditorTitle>Overdrive Synth</EditorTitle>
            {editorTools.map((t) => <ToolButton key={t.label} t={t} />)}
            <QuantValue $col={10} type="button">{icons.bracket}1/16</QuantValue>
            <CloseCorner $col={18} type="button" aria-label="Close editor">{icons.close}</CloseCorner>
          </ToolRow>
          <EditorBody>
            <EditTools>
              <EditTool type="button"><EditIcon>{icons.lock}</EditIcon>LOCK</EditTool>
              <EditTool type="button"><EditIcon>{icons.vel}</EditIcon>VEL</EditTool>
              <EditTool type="button"><EditIcon>{icons.yMove}</EditIcon>Y MOVE</EditTool>
              <EditTool type="button"><EditIcon>{icons.xMove}</EditIcon>X MOVE</EditTool>
              <EditTool type="button"><EditIcon>{icons.length}</EditIcon>LENGTH</EditTool>
            </EditTools>
            <KeysHead>{icons.speaker}</KeysHead>
            <Keys>
              {range(0, 15).map((r) =>
                blackRows.includes(r) ? (
                  <BlackKeyRow key={r} $held={r === 6} />
                ) : (
                  <KeyRow key={r} $held={r === 5} $line={r === 5 || r === 10}>{r === 9 && "C4"}</KeyRow>
                ),
              )}
            </Keys>
            <VelocityHead type="button"><Marker>{icons.triRight}</Marker>Velocity</VelocityHead>
            <Roll>
              <Ruler $height={38}>
                <BarRow $columns={ROLL_COLUMNS}>
                  <RulerCell $fine="6px" $first />
                  {range(58, 64).map((b) => <RulerCell key={b} $fine="6.25%" $first={false} $long>{b}</RulerCell>)}
                  <LastRulerCell $fine="6px" $first={false} $long $bar={98}>65</LastRulerCell>
                </BarRow>
              </Ruler>
              <Notes>
                {range(0, 15).map((r) => <PitchRow key={r} $black={blackRows.includes(r)} $line={r === 5 || r === 10} />)}
                <PartTint style={{ width: rollX(65) }} />
                {rollNotes.map(([s, e, row, tone]) => (
                  <Note key={`${s}-${row}`} $tone={tone} style={{ left: rollX(s), width: rollW(e - s), top: `${row * 6.25}%` }} />
                ))}
                <Layer>
                  <BarRow $columns={ROLL_COLUMNS}>
                    {range(57, 65).map((b) => <RollCell key={b} $first={b === 57} $last={b === 65} />)}
                  </BarRow>
                </Layer>
                <Touch style={{ left: rollX(64.12), top: "46.5%" }} />
              </Notes>
              <Velocity>
                <Layer>
                  <BarRow $columns={ROLL_COLUMNS}>
                    {range(57, 65).map((b) => <RollCell key={b} $first={b === 57} $last={b === 65} />)}
                  </BarRow>
                </Layer>
                {velocities.map(([b, v, tone]) => (
                  <VelocityBar key={b} $tone={tone} style={{ left: rollX(b), height: v }} />
                ))}
              </Velocity>
              <Playhead style={{ left: rollX(PLAYHEAD_BAR) }} />
              <ZoomPanel>
                {icons.xMove}
                <ZoomOut type="button" aria-label="Zoom out">{icons.thinMinus}</ZoomOut>
                <ZoomSlider type="range" aria-label="Horizontal zoom" defaultValue={50} />
                <ZoomButton type="button" aria-label="Zoom in">{icons.thinPlus}</ZoomButton>
                <VerticalZoom type="button" aria-label="Vertical zoom">{icons.yMove}</VerticalZoom>
              </ZoomPanel>
            </Roll>
          </EditorBody>
        </Editor>
        <HomeIndicator />
      </Screen>
    </>
  );
}
